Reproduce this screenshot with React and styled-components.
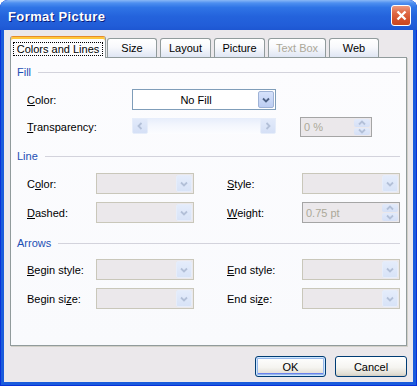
import React from "react";
import styled, { createGlobalStyle } from "styled-components";

const GlobalStyle = createGlobalStyle`
  html, body {
    margin: 0;
    padding: 0;
    background: #ffffff;
  }
  body {
    font-family: "Liberation Sans", Arial, sans-serif;
    font-size: 11px;
    color: #000;
  }
`;

const Window = styled.div`
  width: 417px;
  height: 386px;
  display: flex;
  flex-direction: column;
  background: #1a5bdc;
  border-radius: 8px 8px 0 0;
  box-shadow: inset 0 0 0 1px #0831d9;
  overflow: hidden;
`;

const TitleBar = styled.div`
  height: 30px;
  flex: none;
  display: flex;
  align-items: center;
  justify-content: space-between;
  padding: 0 6px 0 8px;
  background: linear-gradient(
    to bottom,
    #8ab8f6 0%,
    #4d8ff0 10%,
    #2f74e6 25%,
    #2463dc 55%,
    #215dd8 85%,
    #1d56d2 100%
  );
`;

const Title = styled.span`
  font-family: "Liberation Sans", Arial, sans-serif;
  font-weight: bold;
  font-size: 13px;
  letter-spacing: 0.4px;
  padding-top: 3px;
  color: #ffffff;
  text-shadow: 1px 1px 0 #0a1d7a;
`;

const CloseButton = styled.div`
  box-sizing: border-box;
  width: 20px;
  height: 21px;
  border: 1px solid #ffffff;
  border-radius: 3px;
  background: linear-gradient(to bottom, #ec9a80 0%, #e06a47 35%, #d4512c 70%, #c9471f 100%);
  display: flex;
  align-items: center;
  justify-content: center;
`;

const Body = styled.div`
  flex: 1;
  margin: 0 4px 4px 4px;
  background: #ebe8eb;
  padding: 6px 6px 0 6px;
  display: flex;
  flex-direction: column;
`;

const TabStrip = styled.div`
  height: 21px;
  flex: none;
  display: flex;
  align-items: flex-end;
  position: relative;
  z-index: 1;
`;

const Tab = styled.div`
  box-sizing: border-box;
  width: ${(p) => p.$w}px;
  margin-left: ${(p) => p.$gap}px;
  height: ${(p) => (p.$active ? 22 : 19)}px;
  margin-bottom: ${(p) => (p.$active ? -1 : 0)}px;
  border: 1px solid #919b9c;
  border-bottom: none;
  border-radius: 3px 3px 0 0;
  display: flex;
  align-items: center;
  justify-content: center;
  white-space: nowrap;
  color: ${(p) => (p.$disabled ? "#aca899" : "#000")};
  background: ${(p) =>
    p.$active
      ? "#fcfcfe"
      : "linear-gradient(to bottom, #ffffff 0%, #f8f9fc 45%, #dfe6f4 100%)"};
  border-top-color: ${(p) => (p.$active ? "#e68b2c" : "#919b9c")};
  box-shadow: ${(p) => (p.$active ? "inset 0 2px 0 #ffc83c" : "none")};
  padding-top: ${(p) => (p.$active ? 2 : 0)}px;
`;

const TabLabel = styled.span`
  box-sizing: border-box;
  border: 1px dotted ${(p) => (p.$focused ? "#000" : "transparent")};
  padding: 0 ${(p) => (p.$focused ? 3 : 0)}px;
  height: 14px;
  line-height: 12px;
  white-space: nowrap;
  text-align: center;
`;

const Panel = styled.div`
  box-sizing: border-box;
  height: 289px;
  flex: none;
  border: 1px solid #919b9c;
  box-shadow: 1px 1px 0 #d2d0c8;
  background: linear-gradient(to bottom, #fcfcfe 0%, #f9fafd 100%);
  padding: 7px 6px 0 6px;
  display: flex;
  flex-direction: column;
`;

const SectionHeader = styled.div`
  height: 14px;
  display: flex;
  align-items: center;
  gap: 7px;
  color: #1d4fb4;
  margin-top: ${(p) => p.$top}px;

  &::after {
    content: "";
    flex: 1;
    height: 1px;
    background: #d3d3dc;
  }
`;

const FieldGrid = styled.div`
  display: grid;
  grid-template-columns: ${(p) => p.$cols};
  grid-auto-rows: ${(p) => p.$rows};
  row-gap: ${(p) => p.$rowGap}px;
  align-items: center;
  padding-left: 10px;
  margin-top: ${(p) => p.$top}px;
`;

const Label = styled.span`
  white-space: nowrap;
  grid-column: ${(p) => p.$col || "auto"};
`;

const Combo = styled.div`
  box-sizing: border-box;
  height: 21px;
  display: flex;
  padding: 1px;
  border: 1px solid ${(p) => (p.$disabled ? "#c9c7ba" : "#7f9db9")};
  background: ${(p) => (p.$disabled ? "#ebe8eb" : "#ffffff")};
  grid-column: ${(p) => p.$col || "auto"};
`;

const ComboText = styled.div`
  flex: 1;
  display: flex;
  align-items: center;
  justify-content: center;
`;

const DropButton = styled.div`
  box-sizing: border-box;
  width: 16px;
  border-radius: 2px;
  display: flex;
  align-items: center;
  justify-content: center;
  border: 1px solid ${(p) => (p.$disabled ? "#e6edfa" : "#9fb3d6")};
  background: ${(p) =>
    p.$disabled
      ? "linear-gradient(to bottom, #e4ecfb 0%, #d8e3f7 100%)"
      : "linear-gradient(to bottom, #d6e2fb 0%, #bccdf2 100%)"};
`;

const Slider = styled.div`
  box-sizing: border-box;
  height: 16px;
  align-self: start;
  margin-top: 1px;
  display: flex;
  justify-content: space-between;
  background: linear-gradient(to bottom, #e6edfb 0%, #f3f6fd 45%, #fcfdff 100%);
`;

const SliderArrow = styled.div`
  box-sizing: border-box;
  width: 16px;
  border-radius: 2px;
  border: 1px solid #e6edfa;
  background: linear-gradient(to bottom, #e2eafa 0%, #d5e0f6 100%);
  display: flex;
  align-items: center;
  justify-content: center;
`;

const Spin = styled.div`
  box-sizing: border-box;
  height: ${(p) => p.$h}px;
  display: flex;
  padding: 1px;
  border: 1px solid #a5a5a5;
  background: #ebe8eb;
  grid-column: ${(p) => p.$col || "auto"};
`;

const SpinValue = styled.div`
  flex: 1;
  display: flex;
  align-items: center;
  padding-left: 2px;
  color: #aca899;
`;

const SpinButtons = styled.div`
  width: 16px;
  display: flex;
  flex-direction: column;
  gap: 1px;
`;

const SpinHalf = styled.div`
  flex: 1;
  border-radius: 2px;
  background: linear-gradient(to bottom, #e2eafa 0%, #d5e0f6 100%);
  display: flex;
  align-items: center;
  justify-content: center;
`;

const ButtonRow = styled.div`
  display: flex;
  justify-content: flex-end;
  gap: 9px;
  margin-top: 10px;
`;

const Button = styled.button`
  box-sizing: border-box;
  width: ${(p) => p.$w}px;
  height: 21px;
  padding: 0;
  border: 1px solid #003c74;
  border-radius: 3px;
  font-family: "Liberation Sans", Arial, sans-serif;
  font-size: 11px;
  color: #000;
  background: linear-gradient(to bottom, #ffffff 0%, #f5f4f0 55%, #e4e1d8 85%, #d6d0c5 100%);
  box-shadow: ${(p) =>
    p.$default
      ? "inset 0 0 0 1px #cee7ff, inset 0 0 0 2px #98b8ea, inset 0 -2px 0 1px #6982ee"
      : "inset 0 -1px 0 #d6d0c5"};
`;

const Chevron = ({ dir = "down", color }) => {
  const paths = {
    down: "M1 1.5 L4 4.5 L7 1.5",
    up: "M1 4.5 L4 1.5 L7 4.5",
    left: "M4.5 1 L1.5 4 L4.5 7",
    right: "M1.5 1 L4.5 4 L1.5 7",
  };
  const horiz = dir === "left" || dir === "right";
  return (
    <svg width={horiz ? 6 : 8} height={horiz ? 8 : 6} viewBox={horiz ? "0 0 6 8" : "0 0 8 6"}>
      <path d={paths[dir]} fill="none" stroke={color} strokeWidth="1.8" />
    </svg>
  );
};

const DropDown = ({ value, disabled, col }) => (
  <Combo $disabled={disabled} $col={col}>
    <ComboText>{value}</ComboText>
    <DropButton $disabled={disabled}>
      <Chevron color={disabled ? "#b3c0d8" : "#4d6185"} />
    </DropButton>
  </Combo>
);

const SpinBox = ({ value, h, col }) => (
  <Spin $h={h} $col={col}>
    <SpinValue>{value}</SpinValue>
    <SpinButtons>
      <SpinHalf>
        <Chevron dir="up" color="#b3c0d8" />
      </SpinHalf>
      <SpinHalf>
        <Chevron dir="down" color="#b3c0d8" />
      </SpinHalf>
    </SpinButtons>
  </Spin>
);

const tabs = [
  { name: "Colors and Lines", w: 96, gap: 0, active: true },
  { name: "Size", w: 50, gap: 1 },
  { name: "Layout", w: 51, gap: 3 },
  { name: "Picture", w: 51, gap: 3 },
  { name: "Text Box", w: 58, gap: 3, disabled: true },
  { name: "Web", w: 50, gap: 3 },
];

const twoCols = "69px 98px 33px 75px 98px";

export default function App() {
  return (
    <>
      <GlobalStyle />
      <Window>
        <TitleBar>
          <Title>Format Picture</Title>
          <CloseButton>
            <svg width="11" height="11" viewBox="0 0 11 11">
              <path d="M1.5 1.5 L9.5 9.5 M9.5 1.5 L1.5 9.5" stroke="#ffffff" strokeWidth="2.4" />
            </svg>
          </CloseButton>
        </TitleBar>
        <Body>
          <TabStrip>
            {tabs.map((t) => (
              <Tab key={t.name} $w={t.w} $gap={t.gap} $active={t.active} $disabled={t.disabled}>
                <TabLabel $focused={t.active}>{t.name}</TabLabel>
              </Tab>
            ))}
          </TabStrip>
          <Panel>
            <SectionHeader $top={0}>Fill</SectionHeader>
            <FieldGrid $cols="105px 144px 24px 72px" $rows="auto" $rowGap={7} $top={10}>
              <Label>
                <u>C</u>olor:
              </Label>
              <DropDown value="No Fill" />
              <span />
              <span />
              <Label>
                <u>T</u>ransparency:
              </Label>
              <Slider>
                <SliderArrow>
                  <Chevron dir="left" color="#b3c0d8" />
                </SliderArrow>
                <SliderArrow>
                  <Chevron dir="right" color="#b3c0d8" />
                </SliderArrow>
              </Slider>
              <Label $col="4">
                <SpinBox value="0 %" h={20} />
              </Label>
            </FieldGrid>

            <SectionHeader $top={12}>Line</SectionHeader>
            <FieldGrid $cols={twoCols} $rows="21px" $rowGap={8} $top={10}>
              <Label>
                C<u>o</u>lor:
              </Label>
              <DropDown disabled />
              <Label $col="4">
                <u>S</u>tyle:
              </Label>
              <DropDown disabled />
              <Label>
                <u>D</u>ashed:
              </Label>
              <DropDown disabled />
              <Label $col="4">
                <u>W</u>eight:
              </Label>
              <SpinBox value="0.75 pt" h={21} />
            </FieldGrid>

            <SectionHeader $top={13}>Arrows</SectionHeader>
            <FieldGrid $cols={twoCols} $rows="21px" $rowGap={8} $top={9}>
              <Label>
                <u>B</u>egin style:
              </Label>
              <DropDown disabled />
              <Label $col="4">
                <u>E</u>nd style:
              </Label>
              <DropDown disabled />
              <Label>
                Begin si<u>z</u>e:
              </Label>
              <DropDown disabled />
              <Label $col="4">
                End si<u>z</u>e:
              </Label>
              <DropDown disabled />
            </FieldGrid>
          </Panel>
          <ButtonRow>
            <Button $w={71} $default>
              OK
            </Button>
            <Button $w={72}>Cancel</Button>
          </ButtonRow>
        </Body>
      </Window>
    </>
  );
}
